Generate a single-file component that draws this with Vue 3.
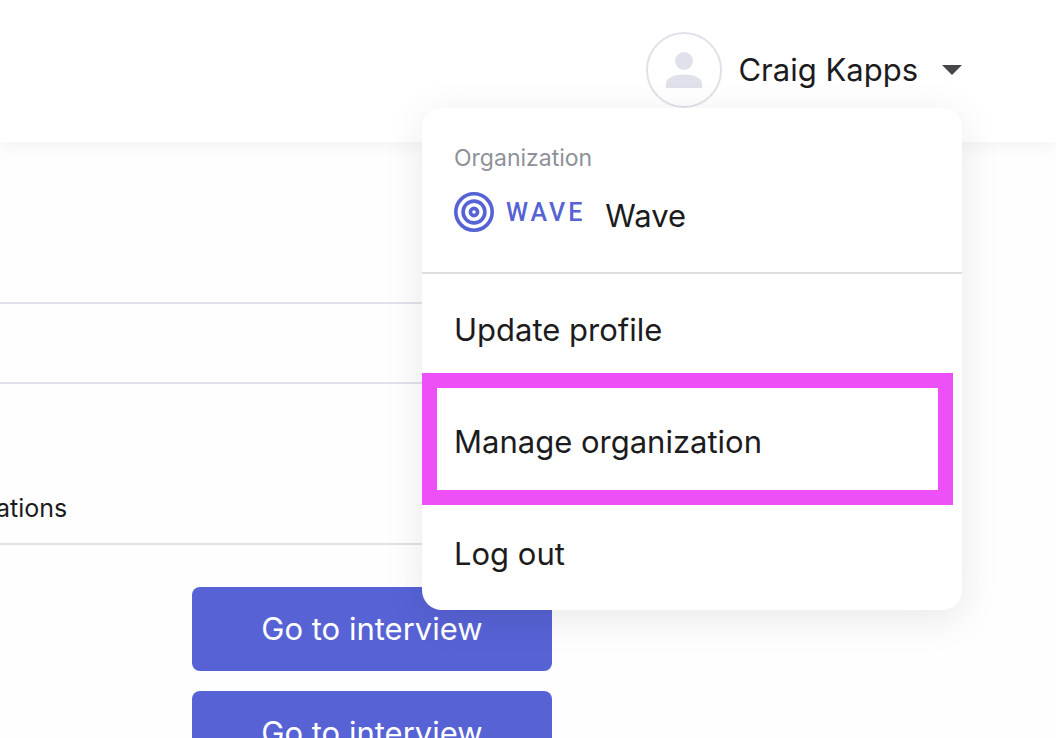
<script setup>
const menuItems = [
  { label: 'Update profile', href: '#profile', highlighted: false },
  { label: 'Manage organization', href: '#organization', highlighted: true },
  { label: 'Log out', href: '#logout', highlighted: false },
]
const interviews = [1, 2]
</script>

<template>
  <div class="page">
    <header class="topbar">
      <div class="account">
        <button class="account-toggle" type="button" aria-haspopup="true" aria-expanded="true">
          <span class="avatar">
            <svg width="36" height="36" viewBox="0 0 36 36" aria-hidden="true">
              <circle cx="18" cy="9" r="9" />
              <path d="M0 36V31.5C0 25.5 9 22.5 18 22.5S36 25.5 36 31.5V36Z" />
            </svg>
          </span>
          <span>Craig Kapps</span>
          <svg class="caret" width="20" height="10" viewBox="0 0 20 10" aria-hidden="true">
            <path d="M0 0H20L10 10Z" />
          </svg>
        </button>

        <div class="menu">
          <section class="organization">
            <h2>Organization</h2>
            <div class="organization-row">
              <span class="logo">
                <svg width="40" height="40" viewBox="0 0 40 40" aria-hidden="true">
                  <circle cx="20" cy="20" r="18.2" />
                  <circle cx="20" cy="20" r="10.9" />
                  <circle cx="20" cy="20" r="3.6" />
                </svg>
                <span class="wordmark">WAVE</span>
              </span>
              <span class="organization-name">Wave</span>
            </div>
          </section>
          <nav>
            <ul>
              <li v-for="item in menuItems" :key="item.label" :class="{ highlighted: item.highlighted }">
                <a :href="item.href">{{ item.label }}</a>
              </li>
            </ul>
          </nav>
        </div>
      </div>
    </header>

    <main class="content">
      <div class="filters"></div>
      <div class="heading"><span>ations</span></div>
      <div class="actions">
        <button v-for="n in interviews" :key="n" type="button">Go to interview</button>
      </div>
    </main>
  </div>
</template>

<style>
body {
  margin: 0;
  overflow: hidden;
  background: #fefefe;
}
</style>

<style scoped>
.page {
  height: 100vh;
  overflow: hidden;
  font-family: Inter, "Liberation Sans", sans-serif;
  font-size: 31px;
  line-height: 40px;
  color: #1c1c1e;
}
.topbar {
  position: relative;
  z-index: 1;
  display: flex;
  justify-content: flex-end;
  box-sizing: border-box;
  height: 142px;
  padding: 32px 94px 0 0;
  background: #fff;
  box-shadow: 0 4px 16px rgba(0, 0, 0, 0.05);
}
.account {
  position: relative;
}
.account-toggle {
  display: flex;
  align-items: center;
  padding: 0;
  border: 0;
  background: none;
  font: inherit;
  color: inherit;
}
.avatar {
  display: flex;
  align-items: center;
  justify-content: center;
  box-sizing: border-box;
  width: 76px;
  height: 76px;
  margin-right: 16px;
  border: 2px solid #dfe2ea;
  border-radius: 50%;
}
.avatar svg {
  fill: #dfe2ea;
}
.caret {
  margin-left: 24px;
  fill: #46474d;
}
.menu {
  position: absolute;
  top: 76px;
  right: 0;
  width: 540px;
  border-radius: 20px;
  background: #fff;
  box-shadow: 0 8px 40px rgba(0, 0, 0, 0.09);
}
.organization {
  padding: 34px 32px 36px;
  border-bottom: 2px solid #dfdfe2;
}
h2 {
  margin: 0 0 14px;
  font-size: 23px;
  line-height: 32px;
  font-weight: 400;
  color: #8e9199;
}
.organization-row {
  display: flex;
  align-items: flex-start;
  height: 48px;
}
.logo {
  display: flex;
  align-items: center;
  gap: 12px;
  padding-top: 3px;
  color: #5762d5;
}
.logo svg {
  fill: none;
  stroke: currentColor;
  stroke-width: 3.6;
}
.wordmark {
  padding-top: 2px;
  font-family: Roboto, sans-serif;
  font-size: 25px;
  font-weight: 500;
  letter-spacing: 3px;
}
.organization-name {
  margin-left: 20px;
  padding-top: 8px;
}
ul {
  margin: 0;
  padding: 0;
  list-style: none;
}
li {
  position: relative;
}
li a {
  display: block;
  padding: 36px 32px;
  color: inherit;
  text-decoration: none;
}
.highlighted::after {
  content: "";
  position: absolute;
  inset: -13px 9px -7px 0;
  border: 15px solid #ed50f7;
  pointer-events: none;
}
.content {
  width: 56%;
  padding-top: 160px;
}
.filters {
  height: 78px;
  border: solid #dfe2ea;
  border-width: 2px 0;
}
.heading {
  display: flex;
  padding: 104px 0 15px;
  border-bottom: 2px solid #e2e2e4;
  font-size: 25px;
}
.heading span {
  margin-left: -4px;
}
.actions {
  display: flex;
  flex-direction: column;
  gap: 20px;
  margin: 42px 0 0 192px;
}
.actions button {
  width: 360px;
  height: 84px;
  padding: 0;
  border: 0;
  border-radius: 8px;
  background: #5762d5;
  color: #fff;
  font: inherit;
}
</style>
